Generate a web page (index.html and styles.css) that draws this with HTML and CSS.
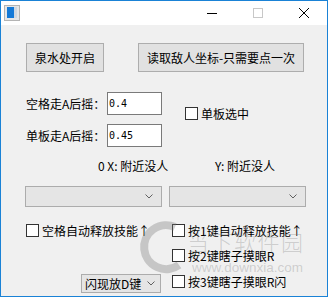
FILE: index.html
```html
<!DOCTYPE html>
<html>
<head>
<meta charset="utf-8">
<link rel="stylesheet" href="styles.css">
</head>
<body>
<div class="window">
  <div class="titlebar">
    <svg class="app-icon" width="16" height="16" viewBox="0 0 16 16">
      <rect x="0.5" y="0.5" width="15" height="15" fill="#e6e6e6" stroke="#b4b4b4"/>
      <rect x="3" y="2" width="7" height="11" fill="#1479d7"/>
      <rect x="10" y="2" width="3" height="11" fill="#cfd8e2"/>
    </svg>
    <div class="spacer"></div>
    <div class="ctl"><svg width="10" height="10" viewBox="0 0 10 10"><line x1="0" y1="5.5" x2="10" y2="5.5" stroke="#000" stroke-width="1"/></svg></div>
    <div class="ctl"><svg width="10" height="10" viewBox="0 0 10 10"><rect x="0.5" y="0.5" width="9" height="9" fill="none" stroke="#c8c8c8"/></svg></div>
    <div class="ctl"><svg width="10" height="10" viewBox="0 0 10 10"><path d="M0 0 L10 10 M10 0 L0 10" stroke="#000" stroke-width="1"/></svg></div>
  </div>
  <div class="client">
    <div class="btn-row">
      <div class="btn btn-a">泉水处开启</div>
      <div class="btn btn-b">读取敌人坐标-只需要点一次</div>
    </div>
    <div class="form">
      <div class="fields">
        <div class="lbl">空格走A后摇：</div>
        <div class="input">0.4</div>
        <div class="lbl">单板走A后摇：</div>
        <div class="input">0.45</div>
      </div>
      <div class="check single"><span class="box"></span><span class="ctext">单板选中</span></div>
    </div>
    <div class="coords">
      <span class="cx">0 X: 附近没人</span>
      <span class="cy">Y: 附近没人</span>
    </div>
    <div class="combos">
      <div class="combo"><svg class="chev" width="8" height="5" viewBox="0 0 8 5"><polyline points="0.5,0.5 4,4 7.5,0.5" fill="none" stroke="#606060"/></svg></div>
      <div class="combo"><svg class="chev" width="8" height="5" viewBox="0 0 8 5"><polyline points="0.5,0.5 4,4 7.5,0.5" fill="none" stroke="#606060"/></svg></div>
    </div>
    <div class="bottom">
      <div class="col-left">
        <div class="check"><span class="box"></span><span class="ctext">空格自动释放技能↑</span></div>
        <div class="combo small"><span class="ctext">闪现放D键</span><svg class="chev" width="8" height="5" viewBox="0 0 8 5"><polyline points="0.5,0.5 4,4 7.5,0.5" fill="none" stroke="#606060"/></svg></div>
      </div>
      <div class="col-right">
        <div class="check"><span class="box"></span><span class="ctext">按1键自动释放技能↑</span></div>
        <div class="check r2"><span class="box"></span><span class="ctext">按2键瞎子摸眼R</span></div>
        <div class="check r3"><span class="box"></span><span class="ctext">按3键瞎子摸眼R闪</span></div>
      </div>
    </div>
  </div>
  <div class="watermark">
    <svg class="wm-logo" width="50" height="70" viewBox="0 0 50 70">
      <path d="M36 12 A22 22 0 1 0 40 50" fill="none" stroke="rgba(120,120,120,0.35)" stroke-width="8"/>
    </svg>
    <div class="wm-cn">当下软件园</div>
    <div class="wm-url">www.downxia.com</div>
  </div>
</div>
</body>
</html>
```
FILE: styles.css
```css
html, body {
  margin: 0;
  padding: 0;
  background: #ffffff;
}
body {
  font-family: "Noto Sans CJK SC", sans-serif;
  font-size: 12px;
  color: #000;
}
.window {
  position: relative;
  box-sizing: border-box;
  width: 328px;
  height: 297px;
  border: 1px solid #1a82d6;
  background: #f0f0f0;
  display: flex;
  flex-direction: column;
  overflow: hidden;
}
.titlebar {
  height: 24px;
  background: #ffffff;
  display: flex;
  align-items: center;
}
.app-icon {
  margin-left: 3px;
  margin-top: -1px;
}
.spacer { flex: 1; }
.ctl {
  width: 46px;
  height: 24px;
  display: flex;
  align-items: center;
  justify-content: center;
}
.client {
  flex: 1;
  padding: 18px 0 0 25px;
}
.btn-row {
  display: flex;
  gap: 34px;
}
.btn {
  box-sizing: border-box;
  height: 29px;
  border: 1px solid #adadad;
  background: #e1e1e1;
  display: flex;
  align-items: center;
  justify-content: center;
  line-height: 14px;
}
.btn-a { width: 78px; }
.btn-b { width: 166px; }
.form {
  margin-top: 20px;
  display: flex;
  align-items: flex-start;
}
.fields {
  display: grid;
  grid-template-columns: 81px 55px;
  grid-template-rows: 23px 23px;
  row-gap: 9px;
  align-items: center;
}
.lbl { line-height: 14px; }
.input {
  box-sizing: border-box;
  height: 23px;
  border: 1px solid #7a7a7a;
  background: #fff;
  padding-left: 1px;
  font-family: "DejaVu Sans Mono", monospace;
  font-size: 10px;
  line-height: 21px;
}
.check {
  display: flex;
  align-items: center;
  height: 13px;
}
.box {
  box-sizing: border-box;
  width: 13px;
  height: 13px;
  border: 1px solid #333;
  background: #fff;
  flex: none;
}
.ctext {
  margin-left: 3px;
  line-height: 13px;
  white-space: nowrap;
}
.single {
  margin-left: 23px;
  margin-top: 15px;
}
.coords {
  margin-top: 12px;
  height: 14px;
  line-height: 14px;
  display: flex;
  padding-left: 72px;
}
.cx { width: 117px; }
.combos {
  margin-top: 13px;
  margin-left: -1px;
  display: flex;
  gap: 7px;
}
.combo {
  box-sizing: border-box;
  width: 137px;
  height: 21px;
  border: 1px solid #acacac;
  background: #e5e5e5;
  display: flex;
  align-items: center;
  justify-content: flex-end;
  padding-right: 8px;
}
.bottom {
  margin-top: 17px;
  display: grid;
  grid-template-columns: 146px auto;
}
.col-left {
  display: flex;
  flex-direction: column;
}
.combo.small {
  margin-top: 37px;
  margin-left: 55px;
  width: 80px;
  height: 19px;
  justify-content: space-between;
  padding-left: 3px;
  padding-right: 5px;
}
.combo.small .ctext { margin-left: 0; }
.r2 { margin-top: 12px; }
.r3 { margin-top: 13px; }
.watermark {
  position: absolute;
  left: 0;
  top: 0;
  width: 100%;
  height: 100%;
  pointer-events: none;
}
.wm-logo {
  position: absolute;
  left: 138px;
  top: 214px;
}
.wm-cn {
  position: absolute;
  left: 186px;
  top: 228px;
  font-size: 22px;
  line-height: 24px;
  letter-spacing: 1.5px;
  font-weight: 300;
  color: rgba(120, 120, 120, 0.3);
  white-space: nowrap;
}
.wm-url {
  position: absolute;
  left: 191px;
  top: 259px;
  font-family: "Liberation Sans", sans-serif;
  font-size: 13.5px;
  line-height: 16px;
  color: rgba(120, 120, 120, 0.3);
  white-space: nowrap;
}
```
